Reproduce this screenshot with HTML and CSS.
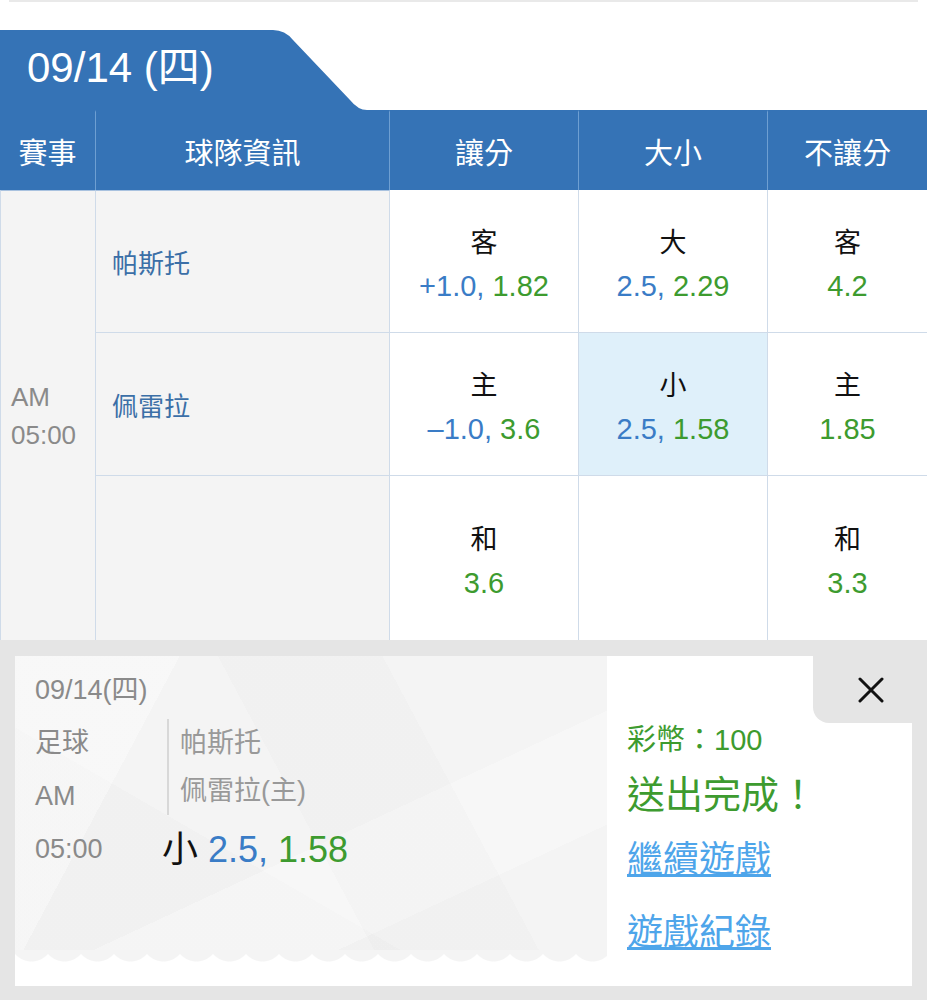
FILE: index.html
```html
<!DOCTYPE html>
<html>
    <head>
        <meta http-equiv="Content-Type" content="text/html; charset=utf-8"/>
        <link rel="stylesheet" href="styles.css">
    </head>
    <body>
        <div class="topline"></div>

        <div class="date_row">
            <div class="date_tab">09/14 (四)</div>
            <svg class="date_slope" width="94" height="80" viewBox="0 0 94 80">
                <path d="M0,0 Q12,0 20,10 L77,70 Q85,80 94,80 L0,80 Z" fill="#3573b6"/>
            </svg>
        </div>

        <div class="odds">
            <div class="head">賽事</div>
            <div class="head">球隊資訊</div>
            <div class="head">讓分</div>
            <div class="head">大小</div>
            <div class="head last">不讓分</div>

            <div class="time_cell">
                <div>AM</div>
                <div>05:00</div>
            </div>

            <div class="team">帕斯托</div>
            <div class="bet">
                <div class="lbl">客</div>
                <div><span class="blue">+1.0,</span> <span class="green">1.82</span></div>
            </div>
            <div class="bet">
                <div class="lbl">大</div>
                <div><span class="blue">2.5,</span> <span class="green">2.29</span></div>
            </div>
            <div class="bet last">
                <div class="lbl">客</div>
                <div><span class="green">4.2</span></div>
            </div>

            <div class="team">佩雷拉</div>
            <div class="bet">
                <div class="lbl">主</div>
                <div><span class="blue">–1.0,</span> <span class="green">3.6</span></div>
            </div>
            <div class="bet picked">
                <div class="lbl">小</div>
                <div><span class="blue">2.5,</span> <span class="green">1.58</span></div>
            </div>
            <div class="bet last">
                <div class="lbl">主</div>
                <div><span class="green">1.85</span></div>
            </div>

            <div class="team bottom"></div>
            <div class="bet bottom">
                <div class="lbl">和</div>
                <div><span class="green">3.6</span></div>
            </div>
            <div class="bet bottom"></div>
            <div class="bet bottom last">
                <div class="lbl">和</div>
                <div><span class="green">3.3</span></div>
            </div>
        </div>

        <div class="slip">
            <div class="ticket">
                <div class="ticket_body">
                    <div class="t_date">09/14(四)</div>
                    <div class="t_info">
                        <div class="t_left">
                            <div>足球</div>
                            <div>AM</div>
                            <div>05:00</div>
                        </div>
                        <div class="t_right">
                            <div class="t_teams">
                                <div>帕斯托</div>
                                <div>佩雷拉(主)</div>
                            </div>
                            <div class="t_pick">小 <span class="blue">2.5,</span> <span class="green">1.58</span></div>
                        </div>
                    </div>
                </div>
                <div class="teeth"></div>
            </div>
            <div class="result">
                <div class="close">
                    <svg width="26" height="26" viewBox="0 0 26 26">
                        <path d="M2,2 L24,24 M24,2 L2,24" stroke="#111" stroke-width="3" stroke-linecap="round"/>
                    </svg>
                </div>
                <div class="coins">彩幣：100</div>
                <div class="done">送出完成！</div>
                <a class="link first" href="#">繼續遊戲</a>
                <a class="link" href="#">遊戲紀錄</a>
            </div>
        </div>
    </body>
</html>
```

FILE: styles.css
```css
body {
    margin: 0;
    width: 927px;
    background: #fff;
    font-family: "Liberation Sans", "Noto Sans CJK TC", sans-serif;
}

.topline {
    height: 2px;
    margin: 0 9px;
    background: #e9e9e9;
}

/* date tab with the sloped edge */
.date_row {
    display: flex;
    margin-top: 28px;
}
.date_tab {
    width: 273px;
    height: 80px;
    box-sizing: border-box;
    padding-left: 27px;
    background: #3573b6;
    color: #fff;
    font-size: 42px;
    line-height: 76px;
}
.date_slope {
    display: block;
}

.odds {
    display: grid;
    grid-template-columns: 96px 294px 189px 189px 159px;
    grid-template-rows: 80px 143px 143px 164px;
}
.head {
    background: #3573b6;
    color: #fff;
    font-size: 29px;
    display: flex;
    align-items: center;
    justify-content: center;
    border-right: 1px solid #6e9fd2;
    border-top: 2px solid #3573b6;
    box-sizing: border-box;
}
.head.last {
    border-right: none;
}

.time_cell {
    grid-row: span 3;
    background: #f4f4f4;
    border-left: 1px solid #cfdbe9;
    border-right: 1px solid #cfdbe9;
    border-top: 1px solid #a9c2df;
    color: #8a8a8a;
    font-size: 26px;
    line-height: 38px;
    padding-left: 10px;
    display: flex;
    flex-direction: column;
    justify-content: center;
}

.team {
    background: #f4f4f4;
    border-right: 1px solid #cfdbe9;
    border-bottom: 1px solid #cfdbe9;
    color: #3b6fa7;
    font-size: 26px;
    padding-left: 16px;
    display: flex;
    align-items: center;
}
.team:nth-child(7) {
    border-top: 1px solid #a9c2df;
}

.bet {
    background: #fff;
    border-right: 1px solid #cfdbe9;
    border-bottom: 1px solid #cfdbe9;
    font-size: 29px;
    line-height: 43px;
    padding-top: 7px;
    box-sizing: border-box;
    display: flex;
    flex-direction: column;
    align-items: center;
    justify-content: center;
}
.bet.last {
    border-right: none;
}
.bottom {
    border-bottom: none;
}
.picked {
    background: #dff0fa;
}
.lbl {
    font-size: 27px;
    color: #111;
}
.blue {
    color: #3a7cc6;
}
.green {
    color: #3d9b2f;
}

/* bottom bet slip */
.slip {
    display: flex;
    height: 360px;
    box-sizing: border-box;
    padding: 16px 15px 14px;
    background: #e5e5e5;
}
.ticket {
    width: 592px;
    display: flex;
    flex-direction: column;
    background: #fff;
}
.ticket_body {
    flex: 1;
    padding: 12px 0 0 20px;
    color: #8a8a8a;
    font-size: 27px;
    background:
        linear-gradient(118deg, rgba(255,255,255,0.35) 0 22%, transparent 22% 100%),
        linear-gradient(62deg, transparent 0 48%, rgba(0,0,0,0.012) 48% 70%, transparent 70% 100%),
        linear-gradient(155deg, transparent 0 58%, rgba(255,255,255,0.3) 58% 78%, transparent 78% 100%),
        linear-gradient(30deg, rgba(0,0,0,0.012) 0 35%, transparent 35% 100%),
        #f4f4f4;
}
.t_date {
    line-height: 44px;
    margin-bottom: 5px;
}
.t_info {
    display: flex;
}
.t_left {
    width: 127px;
    line-height: 53px;
}
.t_teams {
    margin: 2px 0 8px 5px;
    padding-left: 11px;
    border-left: 2px solid #d8d8d8;
    line-height: 48px;
    color: #999;
}
.t_pick {
    font-size: 36px;
    line-height: 53px;
    color: #111;
}
/* zigzag edge at the bottom of the ticket */
.teeth {
    height: 36px;
    background-color: #fff;
    background-image: radial-gradient(circle at 50% -10px, #f4f4f4 21px, transparent 22px);
    background-size: 33px 13px;
    background-repeat: repeat-x;
    background-position: 0 0;
}

.result {
    flex: 1;
    display: flex;
    flex-direction: column;
    background: #fff;
    padding-left: 20px;
}
.close {
    align-self: flex-end;
    width: 99px;
    height: 67px;
    box-sizing: border-box;
    padding-left: 16px;
    background: #e5e5e5;
    border-bottom-left-radius: 16px;
    display: flex;
    align-items: center;
    justify-content: center;
}
.coins {
    color: #3d9b2f;
    font-size: 29px;
    line-height: 34px;
}
.done {
    margin-top: 13px;
    color: #3d9b2f;
    font-size: 38px;
    line-height: 50px;
}
.link {
    color: #4ea5ea;
    font-size: 36px;
    line-height: 73px;
    text-decoration: underline;
    align-self: flex-start;
}
.link.first {
    margin-top: 3px;
}
```
